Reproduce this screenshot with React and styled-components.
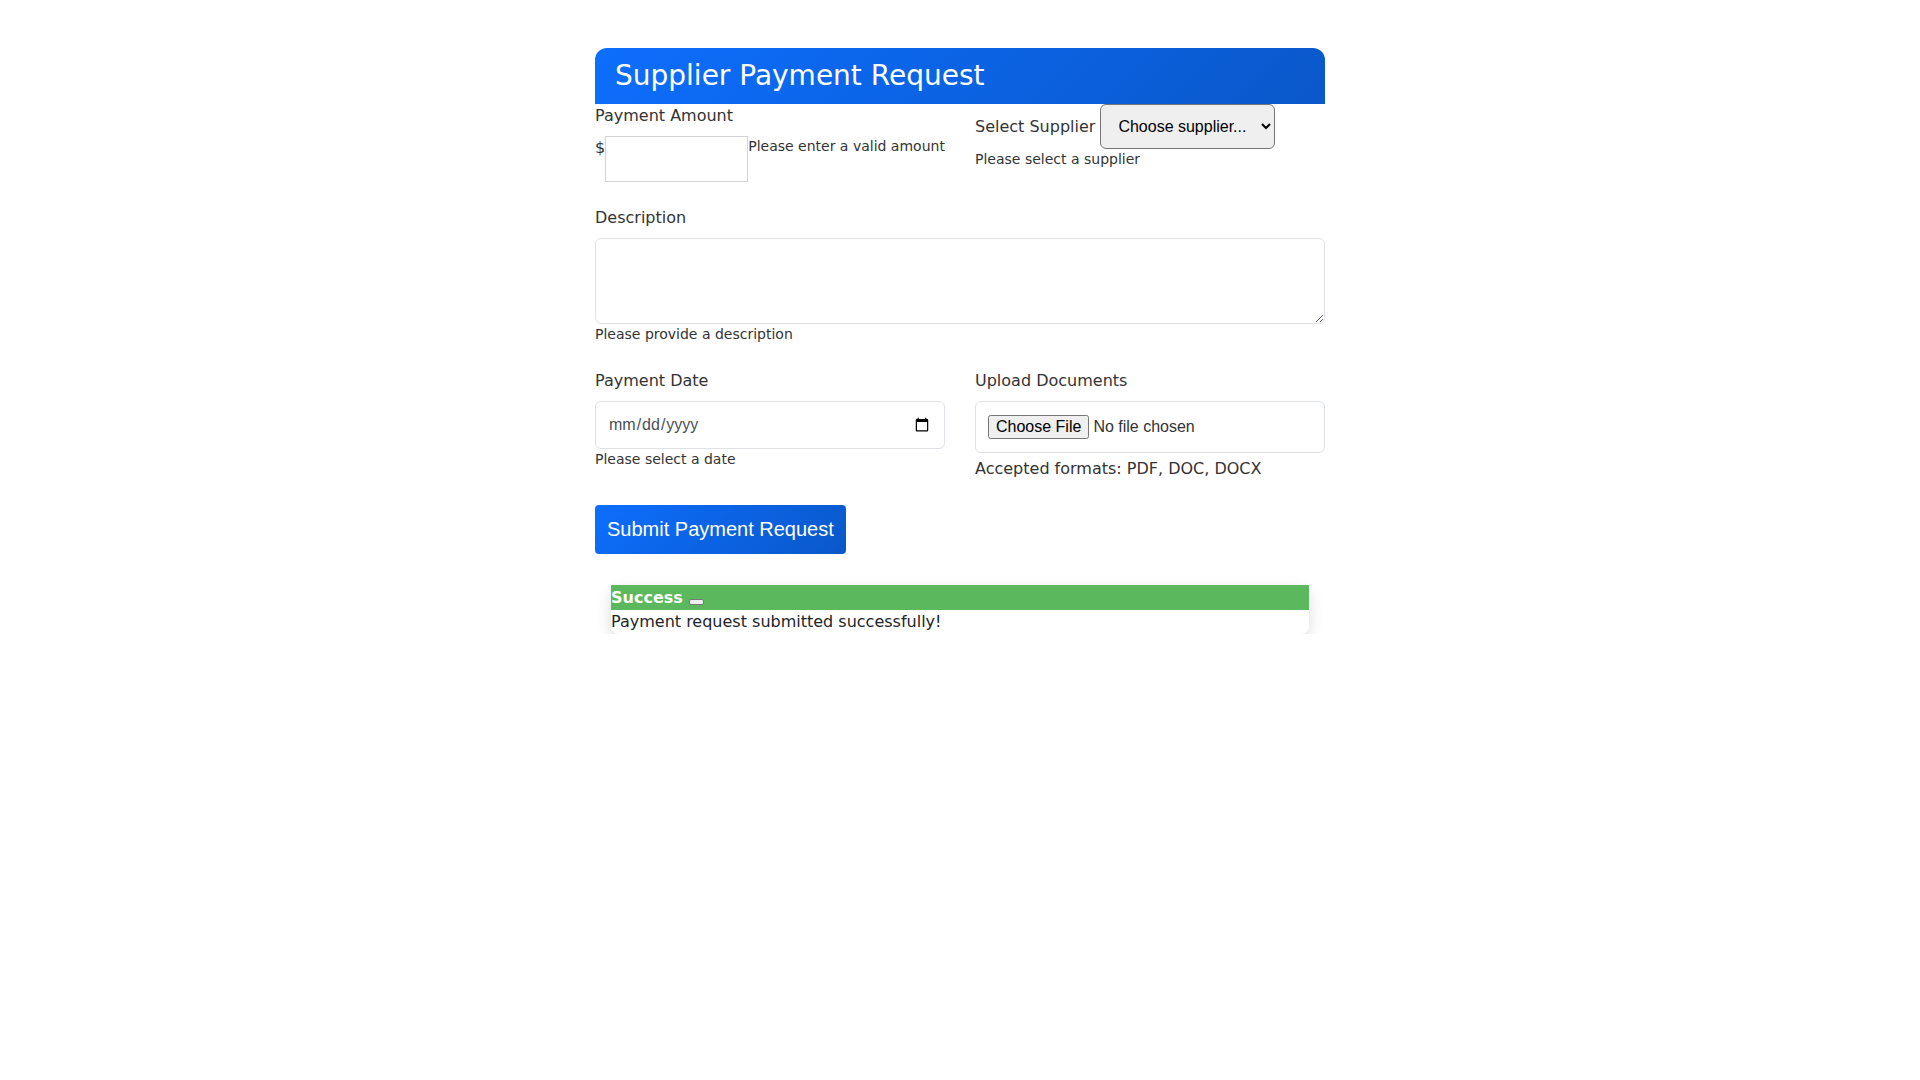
import React from 'react'
import styled, { createGlobalStyle } from 'styled-components'

const GlobalStyle = createGlobalStyle`
  body {
    margin: 0;
    background: #fff;
    font-family: "DejaVu Sans", sans-serif;
    font-size: 16px;
    line-height: 1.5;
    color: #212529;
  }
  * { box-sizing: border-box; }
`

const Page = styled.div`
  width: 730px;
  margin: 0 auto;
  padding-top: 48px;
`

const Header = styled.div`
  background: linear-gradient(135deg, #0d6efd 0%, #0a58ca 100%);
  border-radius: 12px 12px 0 0;
  padding: 11px 20px;
`

const Title = styled.h3`
  margin: 0;
  font-size: 28px;
  font-weight: normal;
  line-height: 1.2;
  color: #fff;
`

const Grid = styled.div`
  display: grid;
  grid-template-columns: 1fr 1fr;
  column-gap: 30px;
  margin-bottom: 24px;
`

const Section = styled.div`
  margin-bottom: 24px;
`

const Label = styled.label`
  display: block;
  color: #333;
  margin-bottom: ${p => (p.$tight ? '0' : '8px')};
`

const Hint = styled.div`
  font-size: ${p => (p.$big ? '16px' : '14px')};
  line-height: ${p => (p.$big ? '24px' : '21px')};
  margin-top: ${p => (p.$big ? '4px' : '0')};
  color: #333;
`

const AmountRow = styled.div`
  display: flex;
  align-items: flex-start;
`

const Currency = styled.span`
  color: #333;
`

const AmountInput = styled.input`
  width: 143px;
  height: 46px;
  border: 1px solid #d4d4d4;
  border-radius: 0;
  padding: 12px;
  font-size: 16px;
  outline: none;
`

const SupplierRow = styled.div`
  display: flex;
  align-items: baseline;
  gap: 5px;
  height: 45px;
`

const Select = styled.select`
  width: 175px;
  height: 45px;
  padding: 0 10px 0 13px;
  font-family: "Liberation Sans", Arial, sans-serif;
  font-size: 16px;
  color: #000;
  background: #efefef;
  border: 1px solid #767676;
  border-radius: 6px;
`

const TextArea = styled.textarea`
  display: block;
  width: 100%;
  height: 86px;
  padding: 6px 12px;
  border: 1px solid #dee2e6;
  border-radius: 6px;
  resize: vertical;
  font-family: "DejaVu Sans", sans-serif;
  font-size: 16px;
`

const DateInput = styled.input`
  display: block;
  width: 100%;
  height: 48px;
  padding: 0 12px;
  border: 1px solid #dee2e6;
  border-radius: 6px;
  font-family: "Liberation Sans", Arial, sans-serif;
  font-size: 16px;
  color: #495057;
`

const FileInput = styled.input`
  display: block;
  width: 100%;
  height: 52px;
  padding: 13px 12px 11px;
  border: 1px solid #dee2e6;
  border-radius: 6px;
  font-family: "Liberation Sans", Arial, sans-serif;
  font-size: 16px;
  color: #333;
`

const SubmitButton = styled.button`
  display: inline-block;
  padding: 13px 12px;
  border: none;
  border-radius: 4px;
  background: linear-gradient(135deg, #0d6efd 0%, #0a58ca 100%);
  color: #fff;
  font-family: "Liberation Sans", Arial, sans-serif;
  font-size: 20px;
  line-height: 23px;
  cursor: pointer;
`

const Alert = styled.div`
  margin: 31px 16px 0;
  background: #fff;
  border-radius: 8px;
  box-shadow: 0 5px 15px rgba(0, 0, 0, 0.14);
`

const AlertHead = styled.div`
  background: #5cb85c;
  color: #fff;
  font-weight: bold;
  line-height: 25px;
`

const Dismiss = styled.button`
  display: inline-block;
  width: 15px;
  height: 6px;
  padding: 0;
  margin-left: 6px;
  vertical-align: -1px;
  background: #efefef;
  border: 1px solid #767676;
  border-radius: 2px;
`

const AlertBody = styled.div`
  color: #212529;
  line-height: 24px;
`

export default function App() {
  return (
    <>
      <GlobalStyle />
      <Page>
        <Header>
          <Title>Supplier Payment Request</Title>
        </Header>
        <form onSubmit={e => e.preventDefault()}>
          <Grid>
            <div>
              <Label htmlFor="amount">Payment Amount</Label>
              <AmountRow>
                <Currency>$</Currency>
                <AmountInput id="amount" type="text" />
                <Hint>Please enter a valid amount</Hint>
              </AmountRow>
            </div>
            <div>
              <SupplierRow>
                <Label $tight htmlFor="supplier">Select Supplier</Label>
                <Select id="supplier" defaultValue="">
                  <option value="">Choose supplier...</option>
                  <option value="1">Acme Supplies</option>
                  <option value="2">Global Parts</option>
                </Select>
              </SupplierRow>
              <Hint>Please select a supplier</Hint>
            </div>
          </Grid>

          <Section>
            <Label htmlFor="desc">Description</Label>
            <TextArea id="desc" rows={3} />
            <Hint>Please provide a description</Hint>
          </Section>

          <Grid>
            <div>
              <Label htmlFor="date">Payment Date</Label>
              <DateInput id="date" type="date" />
              <Hint>Please select a date</Hint>
            </div>
            <div>
              <Label htmlFor="docs">Upload Documents</Label>
              <FileInput id="docs" type="file" accept=".pdf,.doc,.docx" />
              <Hint $big>Accepted formats: PDF, DOC, DOCX</Hint>
            </div>
          </Grid>

          <SubmitButton type="submit">Submit Payment Request</SubmitButton>
        </form>

        <Alert>
          <AlertHead>
            Success
            <Dismiss type="button" aria-label="close" />
          </AlertHead>
          <AlertBody>Payment request submitted successfully!</AlertBody>
        </Alert>
      </Page>
    </>
  )
}
